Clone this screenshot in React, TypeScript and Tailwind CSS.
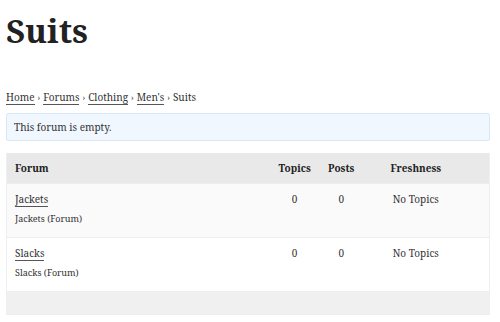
const font = { fontFamily: '"Noto Serif", "DejaVu Serif", "Liberation Serif", serif' }

type ForumRow = { name: string; topics: number; posts: number; freshness: string }

const forums: ForumRow[] = [
  { name: 'Jackets', topics: 0, posts: 0, freshness: 'No Topics' },
  { name: 'Slacks', topics: 0, posts: 0, freshness: 'No Topics' },
]

const crumbs = ['Home', 'Forums', 'Clothing', "Men's"]

export default function App() {
  return (
    <div className="w-[500px] h-[322px] bg-white text-[#333] overflow-hidden" style={font}>
      <div className="pl-[6px] w-[490px]">
        <h1 className="pt-[12px] text-[33px] leading-[38px] font-bold text-[#222]">Suits</h1>

        <div className="mt-[40px] text-[10px] leading-[14px] text-[#333]">
          {crumbs.map((c) => (
            <span key={c}>
              <a className="border-b border-[#555]">{c}</a>
              <span className="text-[8px] px-[3px]">›</span>
            </span>
          ))}
          <span>Suits</span>
        </div>

        <div className="mt-[8px] h-[28px] rounded-[2px] border border-[#d8e8f6] bg-[#f0f7ff] px-[7px] flex items-center text-[10px]">
          This forum is empty.
        </div>

        <div className="mt-[12px] border-x border-b border-[#eee]">
          <div className="flex items-center h-[30px] bg-[#e9e9e9] px-[8px] text-[10px] font-bold text-[#222]">
            <div className="w-[55%]">Forum</div>
            <div className="w-[10%] text-center">Topics</div>
            <div className="w-[10%] text-center">Posts</div>
            <div className="w-[22%] text-center">Freshness</div>
          </div>
          {forums.map((f, i) => (
            <div
              key={f.name}
              className={`flex h-[54px] px-[8px] pt-[7px] border-t border-[#eee] text-[10px] ${i % 2 === 0 ? 'bg-[#fafafa]' : 'bg-white'}`}
            >
              <div className="w-[55%]">
                <a className="border-b border-[#555] leading-[16px]">{f.name}</a>
                <div className="mt-[5px] text-[9px] leading-[13px]">{f.name} (Forum)</div>
              </div>
              <div className="w-[10%] text-center leading-[16px]">{f.topics}</div>
              <div className="w-[10%] text-center leading-[16px]">{f.posts}</div>
              <div className="w-[22%] text-center leading-[16px]">{f.freshness}</div>
            </div>
          ))}
          <div className="h-[23px] bg-[#f0f0f0] border-t border-[#eee]" />
        </div>
      </div>
    </div>
  )
}
